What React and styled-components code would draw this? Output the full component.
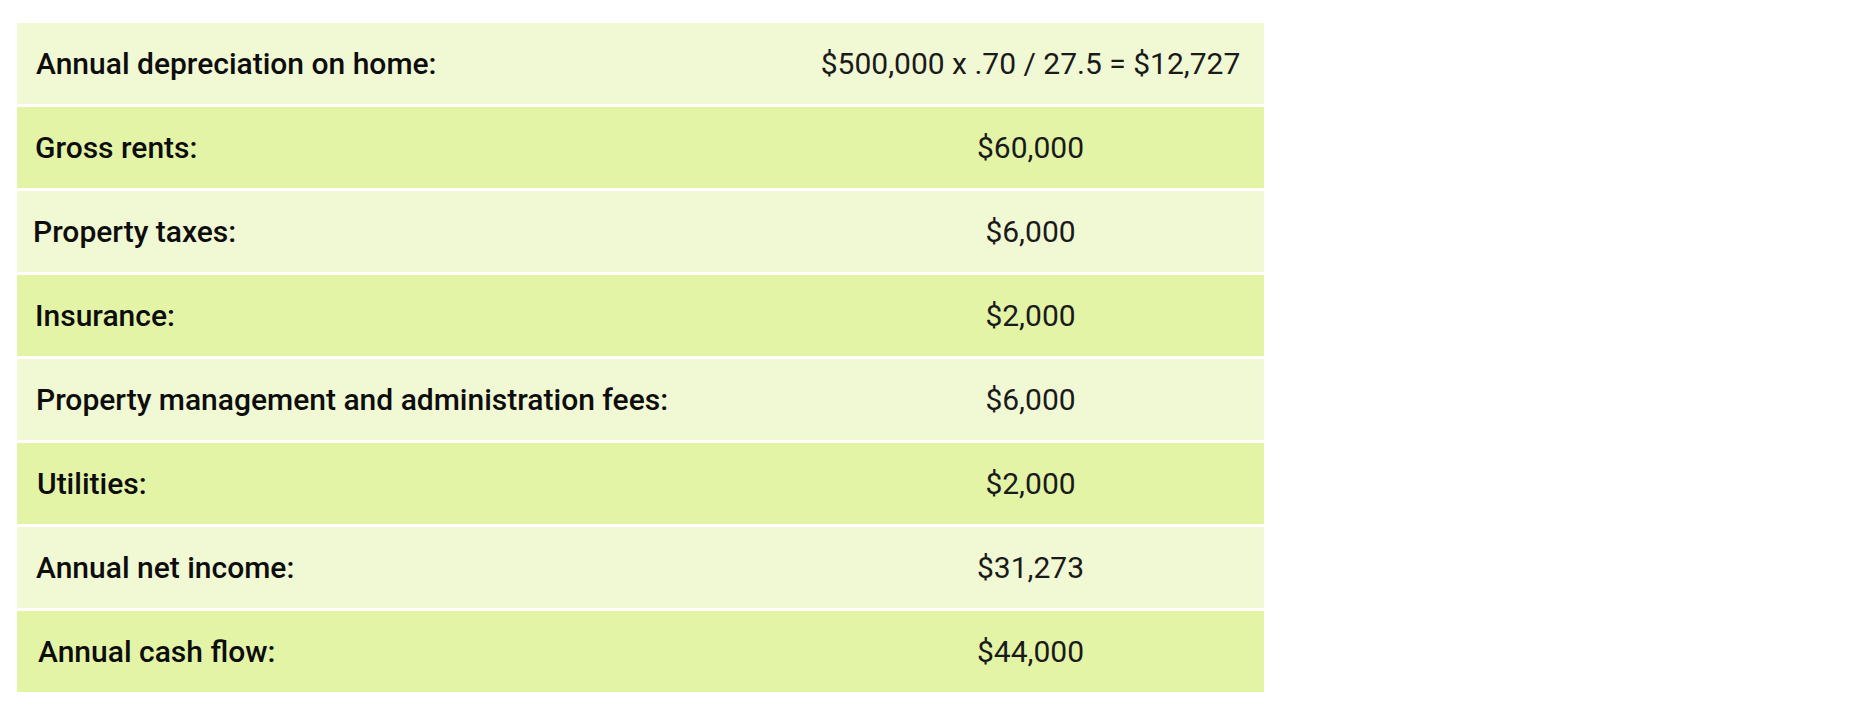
import React from 'react'
import styled, { createGlobalStyle } from 'styled-components'

const GlobalStyle = createGlobalStyle`
  html, body {
    margin: 0;
    padding: 0;
    background: #ffffff;
  }
  body {
    font-family: Roboto, "Liberation Sans", Arial, sans-serif;
    color: #111;
  }
`;

const Page = styled.div`
  padding: 23px 0 0 17px;
`;

const Table = styled.div`
  width: 1247px;
  display: flex;
  flex-direction: column;
  gap: 3px;
`;

const Row = styled.div`
  display: grid;
  grid-template-columns: 1fr 467px;
  align-items: center;
  height: 81px;
  background: ${p => (p.$dark ? '#e3f4a7' : '#f1f8d4')};
`;

const Label = styled.div`
  padding-left: ${p => p.$indent || 19}px;
  font-size: 30px;
  font-weight: 500;
  color: #0d0d0d;
  white-space: nowrap;
`;

const Value = styled.div`
  text-align: center;
  font-size: 30px;
  font-weight: 400;
  color: #1a1a1a;
  white-space: nowrap;
`;

const rows = [
  { label: 'Annual depreciation on home:', value: '$500,000 x .70 / 27.5 = $12,727', indent: 19 },
  { label: 'Gross rents:', value: '$60,000', indent: 18 },
  { label: 'Property taxes:', value: '$6,000', indent: 16 },
  { label: 'Insurance:', value: '$2,000', indent: 18 },
  { label: 'Property management and administration fees:', value: '$6,000', indent: 19 },
  { label: 'Utilities:', value: '$2,000', indent: 20 },
  { label: 'Annual net income:', value: '$31,273', indent: 19 },
  { label: 'Annual cash flow:', value: '$44,000', indent: 21 },
]

const App = () => {
  return (
    <Page>
      <GlobalStyle />
      <Table>
        {rows.map((r, i) => (
          <Row key={r.label} $dark={i % 2 === 1}>
            <Label $indent={r.indent}>{r.label}</Label>
            <Value>{r.value}</Value>
          </Row>
        ))}
      </Table>
    </Page>
  )
}

export default App
